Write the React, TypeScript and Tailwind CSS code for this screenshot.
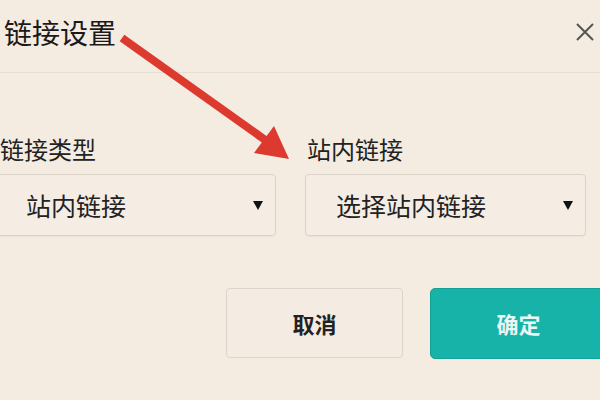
import React from "react";

const font = { fontFamily: '"Noto Sans CJK SC", "Noto Sans", sans-serif' };

function Caret() {
  return (
    <svg width="10" height="10" viewBox="0 0 10 10" className="shrink-0">
      <polygon points="0,1 10,1 5,10" fill="#111" />
    </svg>
  );
}

function Select({ text }: { text: string }) {
  return (
    <div className="h-[62px] rounded-[4px] border border-[#dcd3c8] bg-[#f5ece3] flex items-center justify-between pl-[30px] pr-[12px] shadow-[0_1px_1px_rgba(0,0,0,0.04)]">
      <span className="text-[25px] leading-none text-[#222]">{text}</span>
      <Caret />
    </div>
  );
}

export default function App() {
  return (
    <div
      className="relative w-[600px] h-[400px] overflow-hidden bg-[#f4ebe1] text-[#222]"
      style={font}
    >
      <div className="h-[73px] flex items-start justify-between pl-[4px] pr-[5px] pt-[14px] border-b border-[#e6ded2]">
        <span className="text-[28px] leading-[36px] text-[#1a1a1a]">链接设置</span>
        <svg width="20" height="20" viewBox="0 0 20 20" className="mt-[8px]">
          <path d="M2 2 L18 18 M18 2 L2 18" stroke="#555" strokeWidth="2" />
        </svg>
      </div>

      <div className="ml-[-5px] mt-[63px] grid grid-cols-[281px_281px] gap-x-[29px]">
        <div className="flex flex-col">
          <span className="pl-[5px] text-[24px] leading-[26px] text-[#222]">链接类型</span>
          <div className="mt-[12px]">
            <Select text="站内链接" />
          </div>
        </div>
        <div className="flex flex-col">
          <span className="pl-[2px] text-[24px] leading-[26px] text-[#222]">站内链接</span>
          <div className="mt-[12px]">
            <Select text="选择站内链接" />
          </div>
        </div>
      </div>

      <div className="mt-[52px] ml-[226px] flex gap-[27px]">
        <div className="shrink-0 w-[177px] h-[70px] rounded-[4px] border border-[#ddd5ca] bg-[#f4ece3] flex items-center justify-center">
          <span className="text-[22px] font-bold text-[#222]">取消</span>
        </div>
        <div className="shrink-0 w-[177px] h-[71px] rounded-[5px] border border-[#12a197] bg-[#17b3a8] flex items-center justify-center">
          <span className="text-[22px] font-bold text-[#e8f7f5]">确定</span>
        </div>
      </div>

      <svg
        className="absolute left-0 top-0 pointer-events-none"
        width="600"
        height="400"
        viewBox="0 0 600 400"
      >
        <line x1="122" y1="38" x2="268" y2="142" stroke="#dc3a2e" strokeWidth="8" strokeLinecap="butt" />
        <polygon points="289,159 274,126 254,153" fill="#dc3a2e" />
      </svg>
    </div>
  );
}
